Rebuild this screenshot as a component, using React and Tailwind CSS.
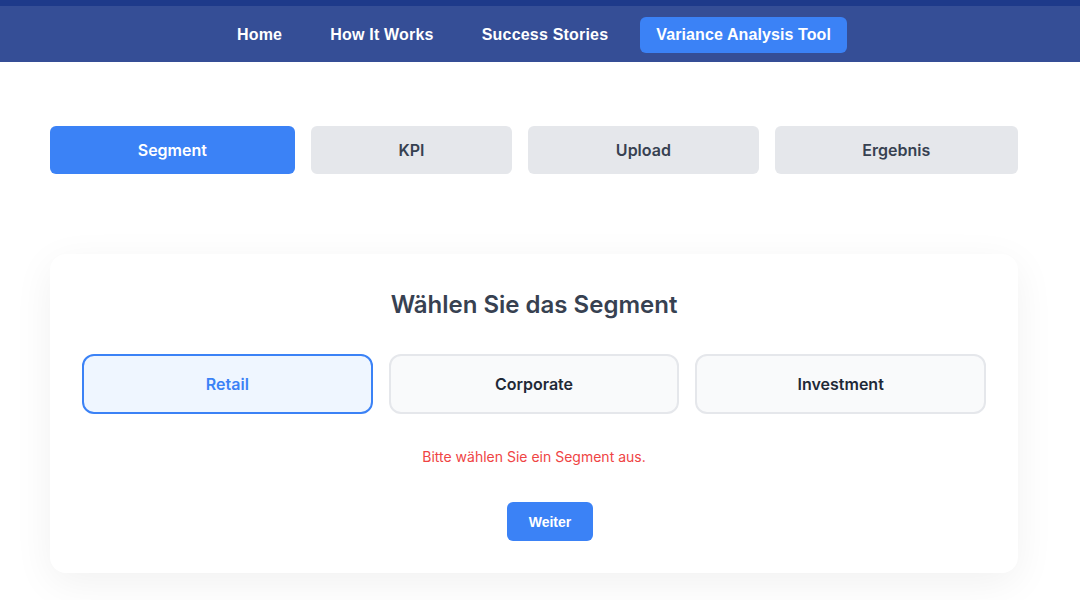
import React from "react";

export default function App() {
  const navLinks = ["Home", "How It Works", "Success Stories"];
  const tabs = ["Segment", "KPI", "Upload", "Ergebnis"];
  const options = ["Retail", "Corporate", "Investment"];
  return (
    <div className="min-h-[600px] bg-white font-['Inter',sans-serif]">
      <div className="h-[6px] bg-[#1e3a8a]" />
      <nav className="h-14 pt-[2px] bg-[#354e96] flex items-center justify-center gap-4 pr-3 font-['Liberation_Sans',Arial,sans-serif]">
        {navLinks.map((l) => (
          <a key={l} className="px-4 py-2 text-white font-bold text-base tracking-[0.2px]">
            {l}
          </a>
        ))}
        <a className="px-4 h-9 flex items-center rounded-md bg-[#3b82f6] text-white font-bold text-base tracking-[0.1px]">
          Variance Analysis Tool
        </a>
      </nav>
      <main className="pt-16 px-[50px] w-[1068px]">
        <div className="flex gap-4">
          {tabs.map((t, i) => (
            <div
              key={t}
              className={
                i === 0
                  ? "flex-auto h-12 flex items-center justify-center rounded-md bg-[#3b82f6] text-white font-semibold text-base px-4"
                  : "flex-auto h-12 flex items-center justify-center rounded-md bg-[#e5e7eb] text-[#374151] font-semibold text-base px-4"
              }
            >
              {t}
            </div>
          ))}
        </div>
        <div className="mt-20 rounded-2xl bg-white px-8 pt-[35px] pb-8 shadow-[0_10px_40px_rgba(0,0,0,0.06)]">
          <h2 className="text-center text-2xl font-semibold text-[#374151] mb-[33px]">
            Wählen Sie das Segment
          </h2>
          <div className="grid grid-cols-3 gap-4">
            {options.map((o, i) => (
              <div
                key={o}
                className={
                  i === 0
                    ? "h-[60px] flex items-center justify-center rounded-xl border-2 border-[#3b82f6] bg-[#eff6ff] text-[#3b82f6] font-semibold text-base"
                    : "h-[60px] flex items-center justify-center rounded-xl border-2 border-[#e5e7eb] bg-[#f9fafb] text-[#1f2937] font-semibold text-base"
                }
              >
                {o}
              </div>
            ))}
          </div>
          <p className="mt-[33px] text-center text-sm text-[#ef4444]">
            Bitte wählen Sie ein Segment aus.
          </p>
          <div className="mt-[35px] flex justify-center pl-8">
            <button className="h-[39px] px-[22px] rounded-md bg-[#3b82f6] text-white font-bold text-sm font-['Liberation_Sans',Arial,sans-serif]">
              Weiter
            </button>
          </div>
        </div>
      </main>
    </div>
  );
}
